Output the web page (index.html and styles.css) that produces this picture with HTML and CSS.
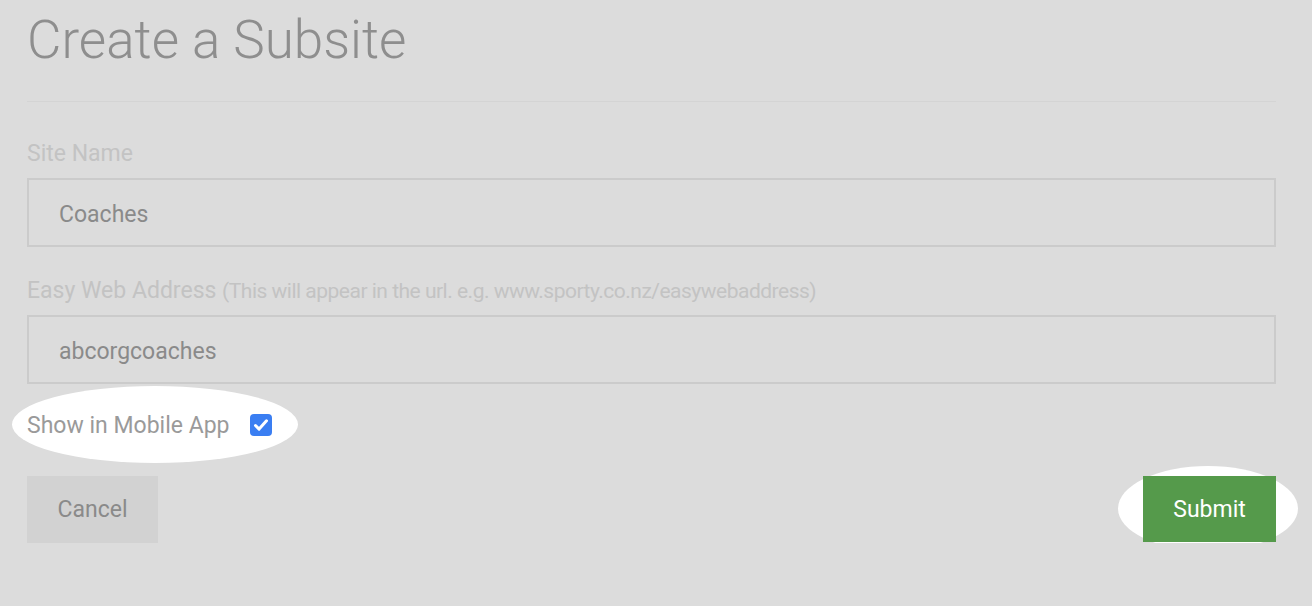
FILE: index.html
```html
<!DOCTYPE html>
<html lang="en">
<head>
<meta charset="utf-8">
<title>Create a Subsite</title>
<link rel="stylesheet" href="styles.css">
</head>
<body>
<main class="page">
  <h1 class="title">Create a Subsite</h1>
  <hr class="divider">
  <form class="form">
    <div class="field">
      <label class="label">Site Name</label>
      <div class="input">Coaches</div>
    </div>
    <div class="field">
      <label class="label">Easy Web Address <span class="hint">(This will appear in the url. e.g. www.sporty.co.nz/easywebaddress)</span></label>
      <div class="input">abcorgcoaches</div>
    </div>
    <div class="check-row">
      <span class="check-label">Show in Mobile App</span>
      <span class="checkbox"><svg width="22" height="22" viewBox="0 0 22 22"><path d="M5.5 11.5l3.6 3.6L16.5 6.8" fill="none" stroke="#fff" stroke-width="3" stroke-linecap="round" stroke-linejoin="round"/></svg></span>
    </div>
    <div class="actions">
      <button type="button" class="btn btn-cancel">Cancel</button>
      <span class="submit-wrap"><button type="button" class="btn btn-submit">Submit</button></span>
    </div>
  </form>
</main>
</body>
</html>
```

FILE: styles.css
```css
html {
  background: #dcdcdc;
}
body {
  margin: 0;
  padding: 0;
  font-family: Roboto, "Liberation Sans", sans-serif;
  color: #8c8c8c;
}
.page {
  padding: 0 36px 0 27px;
}
.title {
  margin: 0;
  padding-top: 9px;
  font-size: 53px;
  font-weight: 300;
  line-height: 62px;
  color: #8e8e8e;
}
.divider {
  margin: 30px 0 0 0;
  border: 0;
  border-top: 1px solid #d4d4d4;
  height: 0;
}
.form {
  display: flex;
  flex-direction: column;
}
.field {
  display: flex;
  flex-direction: column;
}
.field:first-child {
  margin-top: 37px;
}
.field + .field {
  margin-top: 29px;
}
.label {
  font-size: 23px;
  line-height: 30px;
  color: #c3c3c3;
  margin-bottom: 9px;
  white-space: nowrap;
}
.hint {
  font-size: 21px;
  letter-spacing: -0.5px;
}
.input {
  height: 62px;
  box-sizing: content-box;
  border: 2px solid #cbcbcb;
  padding: 3px 30px 0;
  display: flex;
  align-items: center;
  font-size: 23px;
  color: #8a8a8a;
}
.check-row {
  position: relative;
  display: flex;
  align-items: center;
  gap: 21px;
  height: 30px;
  margin-top: 26px;
}
.check-row::before {
  content: "";
  position: absolute;
  left: -15px;
  top: -24px;
  width: 286px;
  height: 77px;
  border-radius: 50%;
  background: #ffffff;
  z-index: -1;
}
.check-label {
  font-size: 23px;
  color: #9a9a9a;
}
.checkbox {
  width: 22px;
  height: 22px;
  border-radius: 4px;
  background: #3a7ef2;
  display: inline-flex;
}
.actions {
  display: flex;
  justify-content: space-between;
  align-items: flex-start;
  margin-top: 36px;
}
.btn {
  border: 0;
  font-family: Roboto, "Liberation Sans", sans-serif;
  font-size: 23px;
  height: 67px;
  padding: 0;
  cursor: pointer;
}
.btn-cancel {
  width: 131px;
  background: #d2d2d2;
  color: #8a8a8a;
}
.submit-wrap {
  position: relative;
  display: inline-flex;
}
.submit-wrap::before {
  content: "";
  position: absolute;
  left: -25px;
  top: -10px;
  width: 180px;
  height: 85px;
  border-radius: 50%;
  background: #ffffff;
  z-index: -1;
}
.btn-submit {
  width: 133px;
  height: 66px;
  background: #559a4b;
  color: #ffffff;
}
```
